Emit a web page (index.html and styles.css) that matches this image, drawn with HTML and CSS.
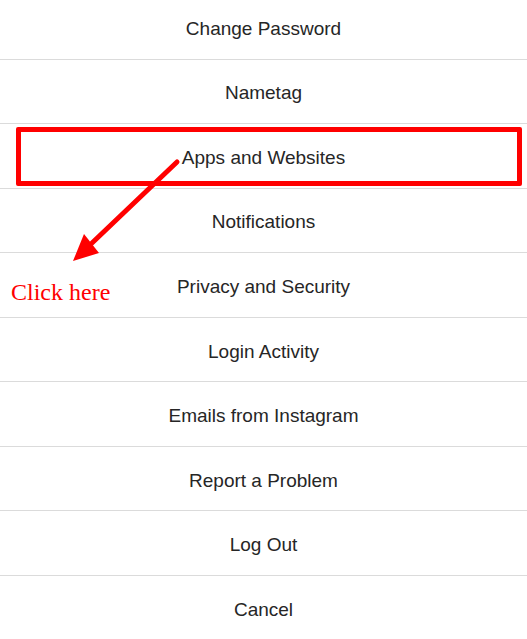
FILE: index.html
```html
<!DOCTYPE html>
<html lang="en">
<head>
    <meta charset="UTF-8">
    <meta name="viewport" content="width=device-width, initial-scale=1.0">
    <title>Settings</title>
    <link rel="stylesheet" href="styles.css">
</head>
<body>
    <div class="page">
        <ul class="menu">
            <li class="menu-item">Change Password</li>
            <li class="menu-item">Nametag</li>
            <li class="menu-item">Apps and Websites</li>
            <li class="menu-item">Notifications</li>
            <li class="menu-item">Privacy and Security</li>
            <li class="menu-item">Login Activity</li>
            <li class="menu-item">Emails from Instagram</li>
            <li class="menu-item">Report a Problem</li>
            <li class="menu-item">Log Out</li>
            <li class="menu-item">Cancel</li>
        </ul>

        <!-- annotation on top of the menu -->
        <div class="highlight"></div>
        <svg class="arrow" width="527" height="639" viewBox="0 0 527 639">
            <line x1="177" y1="162" x2="92" y2="243" stroke="#ff0000" stroke-width="5" stroke-linecap="round"/>
            <polygon points="73,261 84,234 99,253" fill="#ff0000"/>
        </svg>
        <span class="hint">Click here</span>
    </div>
</body>
</html>
```

FILE: styles.css
```css
body { margin: 0; background-color: #fff; font-family: "Liberation Sans", Arial, sans-serif; color: #262626; }
.page { position: relative; width: 527px; height: 639px; overflow: hidden; }
.menu { list-style: none; margin: -5px 0 0; padding: 0; }
.menu-item {
    box-sizing: border-box;
    height: 64.56px;
    padding-top: 4px;
    display: flex;
    align-items: center;
    justify-content: center;
    border-bottom: 1px solid #dbdbdb;
    font-size: 19px;
}
.highlight {
    position: absolute;
    left: 16px;
    top: 127px;
    width: 506px;
    height: 59px;
    box-sizing: border-box;
    border: 5px solid #ff0000;
    border-radius: 2px;
}
.arrow { position: absolute; left: 0; top: 0; }
.hint {
    position: absolute;
    left: 11px;
    top: 280px;
    font-family: "Liberation Serif", "Times New Roman", serif;
    font-size: 24px;
    line-height: 1;
    color: #ff0000;
}
```
